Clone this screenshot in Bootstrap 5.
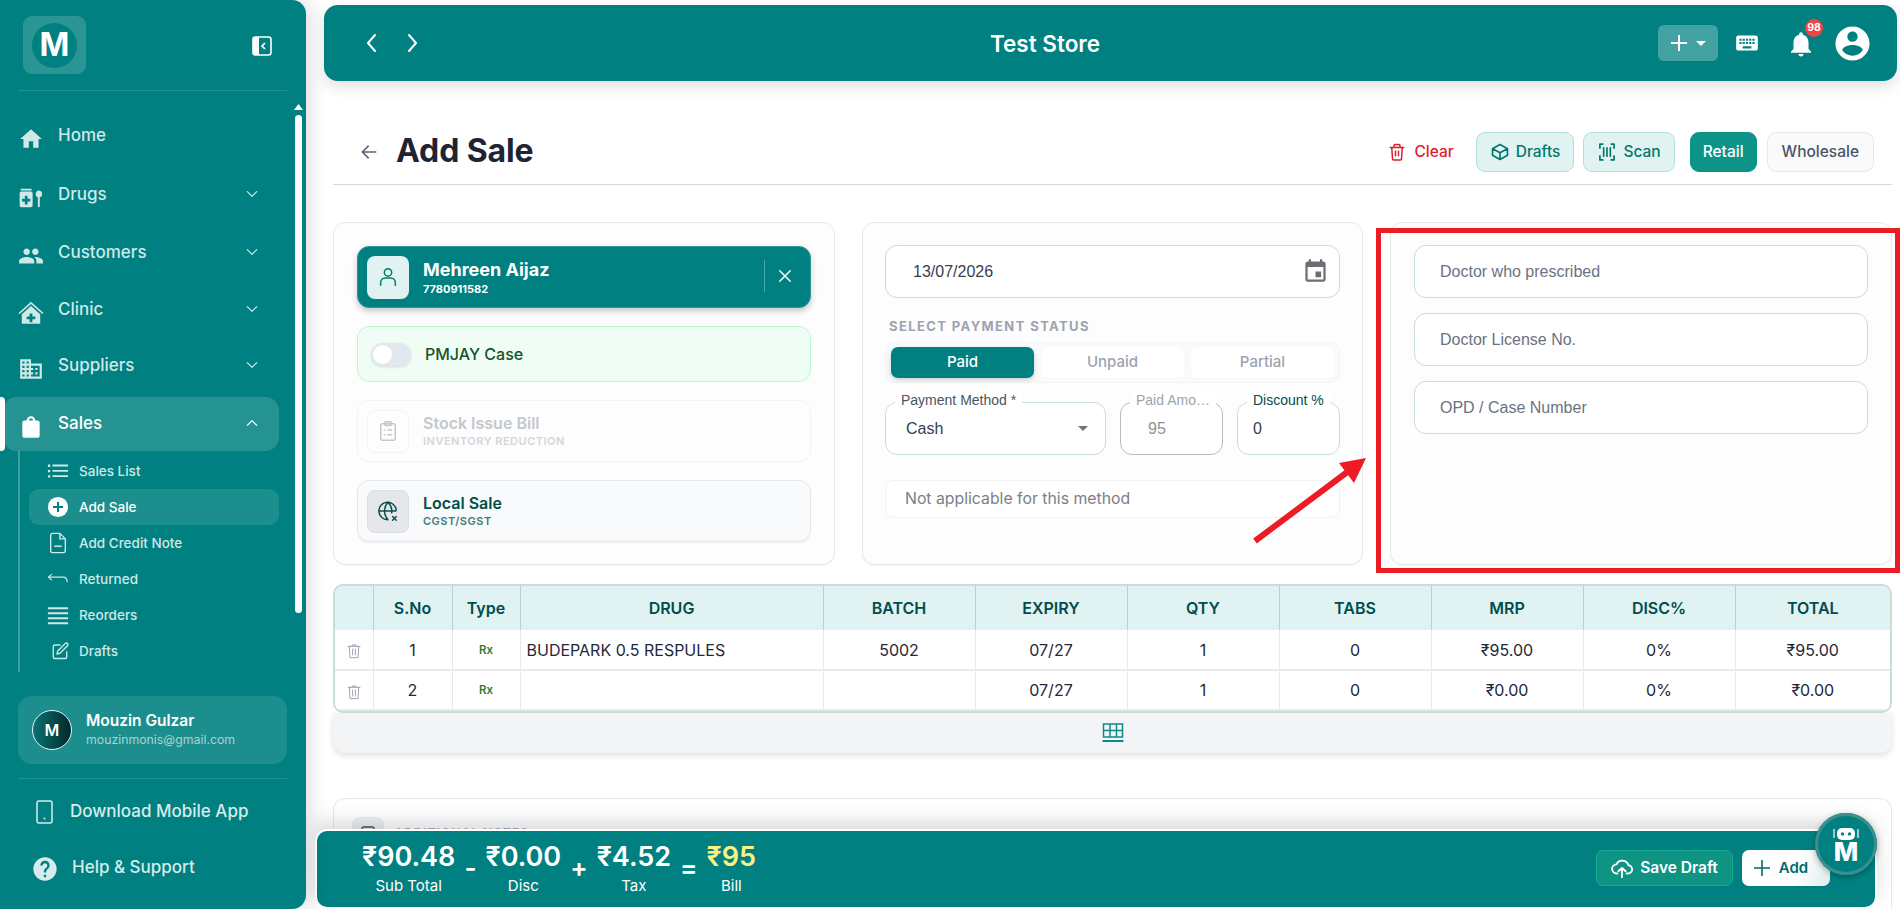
<!DOCTYPE html>
<html lang="en">
<head>
<meta charset="UTF-8">
<meta name="viewport" content="width=device-width, initial-scale=1">
<title>Add Sale - Test Store</title>
<link rel="stylesheet" href="https://cdn.jsdelivr.net/npm/bootstrap@5.3.0/dist/css/bootstrap.min.css">
<style>
html, body { height: 100%; overflow: hidden; }
body { font-family: Inter, "Liberation Sans", sans-serif; background: #fff; color: #1f2937; }
.app-shell { height: 909px; overflow: hidden; }
.ico-fill { fill: currentColor; stroke: none; }
.ico-line { fill: none; stroke: currentColor; stroke-width: 2; stroke-linecap: round; stroke-linejoin: round; }

/* sidebar */
.side { width: 306px; flex: 0 0 306px; background: #008080; border-radius: 0 14px 14px 0; box-shadow: 4px 0 18px rgba(30,40,60,.16); position: relative; z-index: 3; color: #cfe8e8; }
.side-head { height: 91px; margin: 0 19px 0 18px; padding: 16px 15px 0 5px; border-bottom: 1px solid rgba(255,255,255,.14); }
.logo-box { width: 63px; height: 58px; border-radius: 9px; background: rgba(255,255,255,.17); }
.logo-disc { width: 45px; height: 45px; border-radius: 50%; background: #008080; color: #fff; font-weight: 700; font-size: 32px; line-height: 1; }
.collapse-ico { width: 20px; height: 20px; color: #fff; margin-top: 20px; }
.main-nav { margin-top: 15px; }
.main-nav .nav-link { color: #cfe8e8; font-size: 17px; font-weight: 500; height: 58px; padding: 2px 47px 0 18px; gap: 14px; }
.main-nav .nav-link > .nav-ico { width: 26px; height: 26px; margin-top: 5px; flex: none; }
.main-nav .nav-link > .chev { width: 14px; height: 14px; margin-top: -2px; }
.main-nav > .nav-item:nth-child(2) { margin-top: 1px; }
.main-nav > .nav-item:nth-child(4) .nav-link, .main-nav > .nav-item:nth-child(5) .nav-link { height: 56px; }
.main-nav .nav-link.sales-open { height: 54px; margin: 4px 27px 0 3px; padding: 0 20px 0 15px; background: rgba(255,255,255,.15); border-radius: 14px; color: #fff; }
.active-tick { position: absolute; left: 0; top: 397px; width: 5px; height: 54px; background: #fff; border-radius: 0 4px 4px 0; }
.sub-nav { margin: 0 0 0 18px; padding: 2px 27px 3px 9px; border-left: 2px solid rgba(255,255,255,.25); }
.sub-nav .nav-link { height: 36px; padding: 0 0 0 18px; gap: 10px; color: #cfe8e8; font-size: 13.5px; font-weight: 500; border-radius: 10px; }
.sub-nav .nav-link svg { width: 22px; height: 22px; flex: none; }
.sub-nav .nav-link svg.ico-small { width: 18px; height: 18px; margin-left: 4px; }
.sub-nav .nav-link.on { background: rgba(255,255,255,.11); color: #fff; }
.side-user { margin: 24px 19px 0 18px; height: 68px; padding: 0 14px; gap: 14px; background: rgba(255,255,255,.11); border-radius: 14px; }
.side-avatar { width: 40px; height: 40px; border-radius: 50%; border: 1px solid #e6f2f2; background: linear-gradient(90deg, #0a7272, #02292b); color: #fff; font-weight: 600; font-size: 16px; }
.side-user-name { color: #fff; font-size: 15.5px; font-weight: 600; line-height: 20px; }
.side-user-mail { color: #a9d3d3; font-size: 12.3px; line-height: 18px; }
.side-sep { margin: 14px 19px 0 18px; border-top: 1px solid rgba(255,255,255,.14); }
.side-extra { font-size: 17px; font-weight: 500; color: #d6ecec; }
.side-extra svg { flex: none; }
.side-app { margin: 21px 0 0 36px; gap: 17px; height: 24px; }
.side-help { margin: 31px 0 0 31px; gap: 13px; }
.rail { position: absolute; left: 295px; top: 115px; width: 7px; height: 498px; background: #fff; border-radius: 4px; }
.rail-up { position: absolute; left: 294px; top: 104px; width: 9px; height: 6px; background: #fff; clip-path: polygon(50% 0, 100% 100%, 0 100%); }

/* main */
.main-col { padding: 5px 3px 0 18px; position: relative; min-width: 0; }
.top-strip { height: 76px; background: #008080; border-radius: 14px; box-shadow: 0 6px 14px rgba(40,50,60,.14); padding: 0 24px 0 41px; color: #fff; }
.top-strip h1 { font-size: 22.5px; font-weight: 600; margin: 0; }
.top-back { width: 67px; gap: 30px; }
.top-plus { width: 60px; height: 36px; background: rgba(255,255,255,.27); border: 0; border-radius: 6px; color: #fff; padding: 0; }
.caret-w { width: 0; height: 0; border-left: 5px solid transparent; border-right: 5px solid transparent; border-top: 5px solid #fff; }
.bell-wrap { position: relative; width: 28px; height: 28px; margin-left: 26px; }
.bell-count { position: absolute; top: -10px; left: 19px; width: 18px; height: 18px; border-radius: 50%; background: #ef4444; color: #fff; font-size: 10.5px; font-weight: 700; padding: 0; line-height: 18px; }
.user-ico { margin-left: 18px; }
.page-wrap { margin: 0 5px 0 9px; }
.page-top { margin-top: 41px; height: 63px; padding-bottom: 3px; border-bottom: 1px solid #d5d8dc; }
.back-ico { margin-left: 26px; color: #5b6270; }
.page-top h2 { font-size: 32px; font-weight: 700; color: #1e2433; margin: 0 0 0 17px; letter-spacing: -.1px; }
.btn-head { height: 40px; padding: 0 13px; font-size: 15.5px; font-weight: 500; border-radius: 9px; gap: 6px; }
.btn-clear { color: #e11d2a; background: transparent; border: 0; gap: 8px; }
.btn-soft { background: #e0f2f1; border: 1px solid #b2dfdb; color: #00796b; margin-left: 9px; }
.btn-retail { background: #0d9488; border: 1px solid #0d9488; color: #fff; padding: 0 12px; margin-left: 15px; }
.btn-whole { background: #f8fafc; border: 1px solid #e5e7eb; color: #4b5563; padding: 0 14px; margin: 0 18px 0 10px; }

.panels { margin-top: 37px; gap: 27px; }
.panel { height: 343px; min-width: 0; background: #fdfdfd; border: 1px solid #e6e8eb; border-radius: 12px; box-shadow: 0 1px 2px rgba(0,0,0,.04); padding: 22px 23px 0; }
.panel-cust { flex: 0 0 502px; padding-top: 23px; }
.panel-pay { flex: 0 0 501px; padding: 22px 22px 0; }
.panel-doc { flex: 0 0 502px; }
.tile { border-radius: 12px; padding: 0 9px; gap: 14px; }
.tile-box { width: 42px; height: 43px; border-radius: 8px; flex: none; }
.tile-title { font-size: 16px; font-weight: 600; line-height: 20px; }
.tile-sub { font-size: 11px; font-weight: 600; line-height: 16px; letter-spacing: .5px; }
.tile-cust { height: 62px; background: #008080; border: 1px solid #2e9a9a; color: #fff; box-shadow: 0 3px 6px rgba(0,0,0,.22); }
.tile-cust .tile-box { background: #e0f2f1; color: #00796b; }
.tile-cust .tile-title { font-size: 18px; font-weight: 700; line-height: 24px; }
.tile-cust .tile-sub { letter-spacing: 0; font-weight: 700; line-height: 14px; }
.tile-x { border: 0; border-left: 1px solid rgba(255,255,255,.3); height: 32px; padding: 0 0 0 11px; margin: 0 7px 2px 0; background: none; color: #fff; }
.tile-pm { margin-top: 18px; height: 56px; background: #f0fdf4; border: 1px solid #bbf7d0; padding: 0 13px; font-size: 16px; font-weight: 500; color: #14532d; }
.tile-pm .form-check { padding: 0; margin: 0; min-height: 0; }
.tile-pm .form-check-input { width: 40px; height: 23px; margin: 0; float: none; display: block; background-color: #e2e8f0; border: 0; box-shadow: 0 1px 3px rgba(0,0,0,.12); background-image: url("data:image/svg+xml,%3csvg xmlns='http://www.w3.org/2000/svg' viewBox='-4 -4 8 8'%3e%3ccircle r='3.3' fill='%23fff'/%3e%3c/svg%3e"); }
.tile-stock { margin-top: 18px; height: 62px; border: 1px solid #f3f4f6; color: #c4c7cc; }
.tile-stock .tile-box { border: 1px solid #f3f4f6; color: #c4c7cc; }
.tile-stock .tile-sub { color: #d4d6da; }
.tile-local { margin-top: 18px; height: 62px; background: #f8fafc; border: 1px solid #e5e7eb; color: #004d4d; box-shadow: 0 1px 2px rgba(0,0,0,.05); }
.tile-local .tile-box { background: #e5e7eb; border: 1px solid #dcdfe3; color: #0b5050; }
.tile-local .tile-sub { color: #3f7a7a; }

.field { height: 53px; background: #fff; border: 1px solid #c9dbdb; border-radius: 12px; font-family: "Liberation Sans", Arial, sans-serif; font-size: 16px; padding: 0 25px; color: #374151; box-shadow: none; }
.field::placeholder { color: #6b7280; opacity: 1; }
.field-date { padding: 0 10px 0 27px; }
.pay-label { margin: 18px 0 0 4px; font-size: 13px; font-weight: 700; letter-spacing: 1.4px; color: #9ca3af; line-height: 20px; white-space: nowrap; }
.pay-tabs { margin-top: 6px; height: 41px; background: #f9fafb; border: 1px solid #f3f4f6; border-radius: 9px; padding: 4px 5px; gap: 7px; }
.pay-tabs .btn { flex: 1 1 0; padding: 0; border: 0; border-radius: 7px; font-size: 15px; font-weight: 500; background: #fff; color: #9ca3af; }
.pay-tabs .btn.on { background: #008080; color: #fff; box-shadow: 0 2px 5px rgba(0,0,0,.18); }
.pay-fields { margin-top: 19px; gap: 14px; }
.out-box { position: relative; height: 53px; border: 1px solid #c9dbdb; border-radius: 12px; background: #fff; font-family: "Liberation Sans", Arial, sans-serif; font-size: 16px; color: #374151; padding: 0 15px; }
.out-method { flex: 0 0 221px; padding-left: 20px; }
.out-paid { flex: 0 0 103px; }
.out-disc { flex: 0 0 103px; }
.out-box.off { border-color: #b6bcbf; color: #8d9297; padding-left: 27px; }
.out-label { position: absolute; top: -12px; left: 9px; font-size: 14px; line-height: 18px; color: #4b5563; background: #fff; padding: 0 6px; white-space: nowrap; }
.out-box.off .out-label { color: #9ca3af; }
.out-disc .out-label { color: #004d4d; }
.sel-caret { width: 0; height: 0; border-left: 5px solid transparent; border-right: 5px solid transparent; border-top: 5px solid #6b7280; margin-right: 2px; }
.na-box { margin-top: 25px; height: 38px; background: #fff; border: 1px solid #f0f1f3; border-radius: 8px; padding: 0 19px; font-size: 15.8px; color: #7a8088; }
.doc-field + .doc-field { margin-top: 15px; }

.tbl-wrap { margin-top: 19px; border: 2px solid #cbdcdc; border-radius: 10px; overflow: hidden; background: #fff; }
.tbl-wrap .table { table-layout: fixed; margin: 0; font-size: 16px; color: #1f2937; }
.tbl-wrap th { height: 44px; background: #e0f2f1; color: #004d4d; font-size: 16px; font-weight: 600; text-align: center; vertical-align: middle; padding: 0; border-color: #b4d4d1; border-width: 0 1px 0 0; }
.tbl-wrap td { height: 40px; text-align: center; vertical-align: middle; padding: 0 6px; border-color: #e4eceb; border-width: 0 1px 2px 0; background: #fff; }
.tbl-wrap tr th:last-child, .tbl-wrap tr td:last-child { border-right: 0; }
.tbl-wrap td.drug-cell { text-align: left; white-space: nowrap; }
.rx-tag { font-size: 11.5px; font-weight: 600; color: #2e7d32; position: relative; top: -2px; }
.del-ico { width: 16px; height: 16px; color: #9ca3af; }
.tbl-foot { height: 40px; background: #f2f4f5; border-radius: 0 0 12px 12px; box-shadow: 0 3px 6px rgba(0,0,0,.12); color: #0d8a8a; }
.notes-card { margin-top: 45px; height: 111px; background: #fff; border: 1px solid #e5e7eb; border-bottom: 0; border-radius: 12px 12px 0 0; padding: 18px; gap: 10px; color: #a6adbb; font-size: 12px; font-weight: 700; letter-spacing: 1px; align-items: flex-start; }
.notes-ico { width: 32px; height: 32px; border-radius: 8px; background: #eef0f2; padding-top: 9px; }
.notes-ico i { display: block; width: 14px; height: 16px; margin: 0 auto; border: 2px solid #6b7280; border-radius: 3px; }
.notes-text { margin-top: 7px; }

.sum-bar { position: absolute; left: 9px; top: 829px; width: 1562px; height: 80px; background: #008080; border: 2px solid #fff; border-radius: 12px; box-shadow: 0 -8px 18px rgba(40,50,60,.17); padding: 0 45px 2px 45px; color: #fff; gap: 9px; }
.sum-val { font-size: 27px; font-weight: 600; line-height: 33px; white-space: nowrap; }
.sum-lab { font-size: 15px; line-height: 20px; margin-top: 3px; }
.sum-op { font-size: 26px; font-weight: 600; line-height: 1; }
.sum-bill { color: #fdf082; }
.btn-draft { height: 36px; width: 137px; background: #0f9484; border: 1px solid #14ab97; border-radius: 7px; color: #fff; font-size: 15.5px; font-weight: 600; padding: 0; gap: 7px; }
.btn-draft:hover { background: #0f9484; color: #fff; }
.btn-add { height: 36px; width: 88px; background: linear-gradient(100deg, #fff 60%, #dfeeee); border: 0; border-radius: 7px; color: #00696b; font-size: 15px; font-weight: 600; padding: 0 10px 0 0; gap: 9px; }
.bot-disc { position: absolute; left: 1509px; top: 813px; width: 62px; height: 62px; border-radius: 50%; background: #008080; box-shadow: inset 0 0 0 3px #3c8f8f, 0 2px 6px rgba(0,0,0,.3); color: #fff; z-index: 2; }
.bot-m { font-size: 26px; font-weight: 800; line-height: 22px; }

/* annotation laid over the screenshot */
.mark-box { position: absolute; left: 1070px; top: 228px; width: 524px; height: 345px; border: 5px solid #ed1c24; z-index: 4; }
.mark-arrow { position: absolute; left: 0; top: 0; width: 1594px; height: 600px; z-index: 4; pointer-events: none; }
</style>
</head>
<body>
<div class="app-shell d-flex">
    <aside class="side d-flex flex-column">
        <div class="side-head d-flex justify-content-between align-items-start">
            <div class="logo-box d-flex align-items-center justify-content-center">
                <div class="logo-disc d-flex align-items-center justify-content-center">M</div>
            </div>
            <svg class="collapse-ico" viewBox="0 0 20 20"><rect x="1" y="1" width="18" height="18" rx="2.5" fill="none" stroke="currentColor" stroke-width="1.6"/><path class="ico-fill" d="M1 3.5A2.5 2.5 0 0 1 3.500 1H7v18H3.500A2.500 2.500 0 0 1 1 16.500z"/><path d="M13 7l-3 3 3 3" fill="none" stroke="currentColor" stroke-width="1.700"/></svg>
        </div>
        <div class="rail-up"></div>
        <div class="rail"></div>
        <div class="active-tick"></div>

        <ul class="nav flex-column main-nav">
            <li class="nav-item"><a class="nav-link d-flex align-items-center" href="#">
                <svg class="nav-ico" viewBox="0 0 24 24"><path class="ico-fill" d="M10 20v-6h4v6h5v-8h3L12 3 2 12h3v8z"/></svg>Home</a></li>
            <li class="nav-item"><a class="nav-link d-flex align-items-center" href="#">
                <svg class="nav-ico" viewBox="0 0 24 24"><path class="ico-fill" fill-rule="evenodd" d="M2.500 3.500h10v1.500h-10zM3 6h9a1.500 1.500 0 0 1 1.500 1.500V19A1.500 1.500 0 0 1 12 20.500H3A1.500 1.500 0 0 1 1.500 19V7.500A1.500 1.500 0 0 1 3 6zM6.300 10v2.700H3.700v2.600h2.600V18h2.500v-2.700h2.600v-2.600H8.800V10z"/><path class="ico-fill" d="M19.300 5c1.700 0 3 1.500 3 3.300 0 1.500-.9 2.800-2.200 3.100v8.300a.9.900 0 0 1-1.800 0v-8.300c-1.200-.3-2-1.600-2-3.100C16.300 6.500 17.600 5 19.300 5z"/></svg>Drugs
                <svg class="chev ico-line ms-auto" viewBox="0 0 24 24"><path d="M4 8l8 8 8-8"/></svg></a></li>
            <li class="nav-item"><a class="nav-link d-flex align-items-center" href="#">
                <svg class="nav-ico" viewBox="0 0 24 24"><path class="ico-fill" d="M16 11c1.660 0 2.990-1.340 2.990-3S17.660 5 16 5c-1.660 0-3 1.340-3 3s1.340 3 3 3zm-8 0c1.660 0 2.990-1.340 2.990-3S9.660 5 8 5C6.340 5 5 6.340 5 8s1.340 3 3 3zm0 2c-2.330 0-7 1.170-7 3.500V19h14v-2.500c0-2.330-4.670-3.500-7-3.500zm8 0c-.290 0-.620.020-.970.050 1.160.840 1.970 1.970 1.970 3.450V19h6v-2.500c0-2.330-4.670-3.500-7-3.500z"/></svg>Customers
                <svg class="chev ico-line ms-auto" viewBox="0 0 24 24"><path d="M4 8l8 8 8-8"/></svg></a></li>
            <li class="nav-item"><a class="nav-link d-flex align-items-center" href="#">
                <svg class="nav-ico" viewBox="0 0 24 24"><path class="ico-fill" fill-rule="evenodd" d="M12 1.500L.5 12l1 1L12 3.600 22.500 13l1-1zM12 5.500l-8.500 7.700V22h17v-8.800zM10.700 12.500h2.600v2.700H16v2.600h-2.700v2.700h-2.600v-2.700H8v-2.600h2.700z"/></svg>Clinic
                <svg class="chev ico-line ms-auto" viewBox="0 0 24 24"><path d="M4 8l8 8 8-8"/></svg></a></li>
            <li class="nav-item"><a class="nav-link d-flex align-items-center" href="#">
                <svg class="nav-ico" viewBox="0 0 24 24"><path class="ico-fill" d="M12 7V3H2v18h20V7H12zM6 19H4v-2h2v2zm0-4H4v-2h2v2zm0-4H4V9h2v2zm0-4H4V5h2v2zm4 12H8v-2h2v2zm0-4H8v-2h2v2zm0-4H8V9h2v2zm0-4H8V5h2v2zm10 12h-8v-2h2v-2h-2v-2h2v-2h-2V9h8v10zm-2-8h-2v2h2v-2zm0 4h-2v2h2v-2z"/></svg>Suppliers
                <svg class="chev ico-line ms-auto" viewBox="0 0 24 24"><path d="M4 8l8 8 8-8"/></svg></a></li>
            <li class="nav-item"><a class="nav-link sales-open d-flex align-items-center" href="#">
                <svg class="nav-ico" viewBox="0 0 24 24"><path class="ico-fill" d="M18 6h-2c0-2.210-1.790-4-4-4S8 3.790 8 6H6c-1.100 0-2 .9-2 2v12c0 1.100.9 2 2 2h12c1.100 0 2-.9 2-2V8c0-1.100-.9-2-2-2zm-6-2c1.100 0 2 .9 2 2h-4c0-1.100.9-2 2-2z"/></svg>Sales
                <svg class="chev ico-line ms-auto" viewBox="0 0 24 24"><path d="M4 16l8-8 8 8"/></svg></a>
                <ul class="nav flex-column sub-nav">
                    <li class="nav-item"><a class="nav-link d-flex align-items-center" href="#"><svg viewBox="0 0 24 24"><path class="ico-fill" d="M1 5h2.500v2.500H1zM1 10.800h2.500v2.500H1zM1 16.500h2.500V19H1zM6 5h17v2H6zM6 10.800h17v2H6zM6 16.500h17v2H6z"/></svg>Sales List</a></li>
                    <li class="nav-item"><a class="nav-link on d-flex align-items-center" href="#"><svg viewBox="0 0 24 24"><path fill="#fff" d="M12 1a11 11 0 1 0 0 22 11 11 0 0 0 0-22z"/><path d="M12 6.500v11M6.500 12h11" stroke="#008080" stroke-width="2.200" fill="none"/></svg>Add Sale</a></li>
                    <li class="nav-item"><a class="nav-link d-flex align-items-center" href="#"><svg class="ico-line" viewBox="0 0 24 24"><path stroke-width="1.500" d="M14 1.500H6A2 2 0 0 0 4 3.500v17a2 2 0 0 0 2 2h12a2 2 0 0 0 2-2V7.500zM14 1.500v6h6M8.500 15.500h7"/></svg>Add Credit Note</a></li>
                    <li class="nav-item"><a class="nav-link d-flex align-items-center" href="#"><svg class="ico-line" viewBox="0 0 24 24"><path stroke-width="1.300" d="M5 7L1.500 10 5 13M2 10h15c3 0 5 2 5 5"/></svg>Returned</a></li>
                    <li class="nav-item"><a class="nav-link d-flex align-items-center" href="#"><svg viewBox="0 0 24 24"><path class="ico-fill" d="M1 3.500h22v2.200H1zM1 9h22v2.200H1zM1 14.500h22v2.200H1zM1 20h22v2.200H1z"/></svg>Reorders</a></li>
                    <li class="nav-item"><a class="nav-link d-flex align-items-center" href="#"><svg class="ico-line ico-small" viewBox="0 0 24 24"><path stroke-width="1.800" d="M12 4H5a2 2 0 0 0-2 2v14a2 2 0 0 0 2 2h14a2 2 0 0 0 2-2v-7M19 2a2.100 2.100 0 0 1 3 3L12 15l-4 1 1-4z"/></svg>Drafts</a></li>
                </ul>
            </li>
        </ul>

        <div class="side-user d-flex align-items-center">
            <div class="side-avatar d-flex align-items-center justify-content-center flex-shrink-0">M</div>
            <div>
                <div class="side-user-name">Mouzin Gulzar</div>
                <div class="side-user-mail">mouzinmonis@gmail.com</div>
            </div>
        </div>
        <div class="side-sep"></div>
        <div class="side-extra side-app d-flex align-items-center">
            <svg width="17" height="24" viewBox="0 0 17 24"><rect x="1" y="1" width="15" height="22" rx="2" fill="none" stroke="currentColor" stroke-width="1.500"/><circle cx="8.500" cy="18.500" r="1" fill="currentColor"/></svg>
            Download Mobile App
        </div>
        <div class="side-extra side-help d-flex align-items-start">
            <svg width="28" height="28" viewBox="0 0 24 24"><path class="ico-fill" d="M12 2C6.480 2 2 6.480 2 12s4.480 10 10 10 10-4.480 10-10S17.520 2 12 2zm1 17h-2v-2h2v2zm2.070-7.750l-.9.920C13.450 12.900 13 13.500 13 15h-2v-.5c0-1.100.450-2.100 1.170-2.830l1.240-1.260c.370-.360.590-.860.590-1.410 0-1.100-.9-2-2-2s-2 .9-2 2H8c0-2.210 1.790-4 4-4s4 1.790 4 4c0 .880-.360 1.680-.930 2.250z"/></svg>
            <span>Help &amp; Support</span>
        </div>
    </aside>

    <main class="main-col flex-grow-1">
        <header class="top-strip d-flex align-items-center justify-content-between">
            <div class="top-back d-flex align-items-center">
                <svg width="12" height="20" viewBox="0 0 12 20" class="ico-line flex-shrink-0"><path d="M10 2L3 10l7 8"/></svg>
                <svg width="12" height="20" viewBox="0 0 12 20" class="ico-line flex-shrink-0"><path d="M2 2l7 8-7 8"/></svg>
            </div>
            <h1>Test Store</h1>
            <div class="d-flex align-items-center">
                <button class="btn top-plus d-flex align-items-center justify-content-center gap-2" type="button">
                    <svg width="18" height="18" viewBox="0 0 18 18"><path d="M9 1v16M1 9h16" stroke="#fff" stroke-width="2"/></svg>
                    <span class="caret-w"></span>
                </button>
                <svg class="ms-3" width="26" height="26" viewBox="0 0 24 24"><path class="ico-fill" d="M20 5H4c-1.100 0-1.990.9-1.990 2L2 17c0 1.100.9 2 2 2h16c1.100 0 2-.9 2-2V7c0-1.100-.9-2-2-2zm-9 3h2v2h-2V8zm0 3h2v2h-2v-2zM8 8h2v2H8V8zm0 3h2v2H8v-2zm-1 2H5v-2h2v2zm0-3H5V8h2v2zm9 7H8v-2h8v2zm0-4h-2v-2h2v2zm0-3h-2V8h2v2zm3 3h-2v-2h2v2zm0-3h-2V8h2v2z"/></svg>
                <div class="bell-wrap">
                    <svg width="30" height="30" viewBox="0 0 24 24"><path class="ico-fill" d="M12 22c1.100 0 2-.9 2-2h-4c0 1.100.890 2 2 2zm6-6v-5c0-3.070-1.640-5.640-4.500-6.320V4c0-.830-.670-1.500-1.500-1.500s-1.500.670-1.500 1.500v.680C7.630 5.360 6 7.920 6 11v5l-2 2v1h16v-1l-2-2z"/></svg>
                    <span class="badge bell-count">98</span>
                </div>
                <svg class="user-ico" width="41" height="41" viewBox="0 0 24 24"><path class="ico-fill" d="M12 2C6.480 2 2 6.480 2 12s4.480 10 10 10 10-4.480 10-10S17.520 2 12 2zm0 3c1.660 0 3 1.340 3 3s-1.340 3-3 3-3-1.340-3-3 1.340-3 3-3zm0 14.200c-2.500 0-4.710-1.280-6-3.220.030-1.990 4-3.080 6-3.080 1.990 0 5.970 1.090 6 3.080-1.290 1.940-3.500 3.220-6 3.220z"/></svg>
            </div>
        </header>

        <div class="page-wrap">
            <div class="page-top d-flex align-items-center">
                <svg class="back-ico" width="20" height="20" viewBox="0 0 24 24"><path class="ico-line" d="M20 12H4M11 5l-7 7 7 7"/></svg>
                <h2>Add Sale</h2>
                <div class="ms-auto d-flex align-items-center">
                    <button class="btn btn-head btn-clear d-flex align-items-center" type="button">
                        <svg class="ico-line" width="18" height="18" viewBox="0 0 24 24"><path d="M3 6h18M8 6V3.500A1.500 1.500 0 0 1 9.500 2h5A1.500 1.500 0 0 1 16 3.500V6M5 6l1 15a1.500 1.500 0 0 0 1.500 1.500h9A1.500 1.500 0 0 0 18 21l1-15M10 11v6M14 11v6"/></svg>Clear
                    </button>
                    <button class="btn btn-head btn-soft d-flex align-items-center" type="button">
                        <svg class="ico-line" width="20" height="20" viewBox="0 0 24 24"><path d="M21 8L12 3 3 8v8l9 5 9-5zM3 8l9 5 9-5M12 13v8"/></svg>Drafts
                    </button>
                    <button class="btn btn-head btn-soft d-flex align-items-center" type="button">
                        <svg class="ico-line" width="20" height="20" viewBox="0 0 24 24"><path d="M7 2.500H3.500v5M17 2.500h3.500v5M7 21.500H3.500v-5M17 21.500h3.500v-5M8 7v10M12 7v10M16 7v10"/></svg>Scan
                    </button>
                    <button class="btn btn-head btn-retail" type="button">Retail</button>
                    <button class="btn btn-head btn-whole" type="button">Wholesale</button>
                </div>
            </div>

            <div class="panels d-flex">
                <section class="panel panel-cust">
                    <div class="tile tile-cust d-flex align-items-center">
                        <div class="tile-box d-flex align-items-center justify-content-center">
                            <svg class="ico-line" width="22" height="22" viewBox="0 0 24 24"><circle cx="12" cy="7" r="4" stroke-width="1.600"/><path stroke-width="1.600" d="M4 21v-3a5 5 0 0 1 5-5h6a5 5 0 0 1 5 5v3"/></svg>
                        </div>
                        <div class="flex-grow-1">
                            <div class="tile-title">Mehreen Aijaz</div>
                            <div class="tile-sub">7780911582</div>
                        </div>
                        <button class="tile-x d-flex align-items-center" type="button" aria-label="Remove">
                            <svg class="ico-line" width="18" height="18" viewBox="0 0 24 24"><path d="M5 5l14 14M19 5L5 19"/></svg>
                        </button>
                    </div>
                    <div class="tile tile-pm d-flex align-items-center">
                        <div class="form-check form-switch"><input class="form-check-input" type="checkbox" role="switch" aria-label="PMJAY Case"></div>
                        <span>PMJAY Case</span>
                    </div>
                    <div class="tile tile-stock d-flex align-items-center">
                        <div class="tile-box d-flex align-items-center justify-content-center">
                            <svg class="ico-line" width="22" height="22" viewBox="0 0 24 24"><g stroke-width="1.600"><rect x="4" y="4" width="16" height="18" rx="2"/><rect x="8.500" y="2" width="7" height="4" rx="1"/><path d="M8 11h.5M12 11h4M8 16h.5M12 16h4"/></g></svg>
                        </div>
                        <div>
                            <div class="tile-title">Stock Issue Bill</div>
                            <div class="tile-sub">INVENTORY REDUCTION</div>
                        </div>
                    </div>
                    <div class="tile tile-local d-flex align-items-center">
                        <div class="tile-box d-flex align-items-center justify-content-center">
                            <svg class="ico-line" width="22" height="22" viewBox="0 0 24 24"><path stroke-width="1.600" d="M21 11A9.500 9.500 0 1 0 12 21.500M2.500 12h18M12 2.500c-5 5.500-5 13.500 0 19M12 2.500c3.500 3.500 4.500 8 4 11.500M17 18l4 4M21 18l-4 4"/></svg>
                        </div>
                        <div>
                            <div class="tile-title">Local Sale</div>
                            <div class="tile-sub">CGST/SGST</div>
                        </div>
                    </div>
                </section>

                <section class="panel panel-pay">
                    <div class="form-control field field-date d-flex align-items-center justify-content-between">
                        <span>13/07/2026</span>
                        <svg style="color:#6b6f73" width="27" height="27" viewBox="0 0 24 24"><path class="ico-fill" d="M17 12h-5v5h5v-5zM16 1v2H8V1H6v2H5c-1.110 0-1.990.9-1.990 2L3 19c0 1.100.890 2 2 2h14c1.100 0 2-.9 2-2V5c0-1.100-.9-2-2-2h-1V1h-2zm3 18H5V8h14v11z"/></svg>
                    </div>
                    <div class="pay-label">SELECT PAYMENT STATUS</div>
                    <div class="pay-tabs d-flex">
                        <button class="btn on" type="button">Paid</button>
                        <button class="btn" type="button">Unpaid</button>
                        <button class="btn" type="button">Partial</button>
                    </div>
                    <div class="pay-fields d-flex">
                        <div class="out-box out-method d-flex align-items-center justify-content-between">
                            <span class="out-label">Payment Method *</span><span>Cash</span><span class="sel-caret"></span>
                        </div>
                        <div class="out-box out-paid off d-flex align-items-center">
                            <span class="out-label">Paid Amo…</span><span>95</span>
                        </div>
                        <div class="out-box out-disc d-flex align-items-center">
                            <span class="out-label">Discount %</span><span>0</span>
                        </div>
                    </div>
                    <div class="na-box d-flex align-items-center justify-content-between">
                        <span>Not applicable for this method</span>
                        <svg class="ico-line" style="color:#c8cbce;margin-right:4px" width="12" height="12" viewBox="0 0 24 24"><path d="M4 20L18 4l3 3L7 21z"/></svg>
                    </div>
                </section>

                <section class="panel panel-doc">
                    <input class="form-control field doc-field" type="text" placeholder="Doctor who prescribed">
                    <input class="form-control field doc-field" type="text" placeholder="Doctor License No.">
                    <input class="form-control field doc-field" type="text" placeholder="OPD / Case Number">
                </section>
            </div>

            <div class="tbl-wrap">
                <table class="table">
                    <colgroup><col style="width:38px"><col style="width:79px"><col style="width:68px"><col style="width:303px"><col style="width:152px"><col style="width:152px"><col style="width:152px"><col style="width:152px"><col style="width:152px"><col style="width:152px"><col></colgroup>
                    <thead>
                        <tr><th></th><th>S.No</th><th>Type</th><th>DRUG</th><th>BATCH</th><th>EXPIRY</th><th>QTY</th><th>TABS</th><th>MRP</th><th>DISC%</th><th>TOTAL</th></tr>
                    </thead>
                    <tbody>
                        <tr>
                            <td class="p-0"><svg class="del-ico ico-line" viewBox="0 0 24 24"><path stroke-width="1.500" d="M3 5h18M9 5V3h6v2M5 5l1 17h12l1-17M10 9v9M14 9v9"/></svg></td>
                            <td>1</td><td><span class="rx-tag">Rx</span></td><td class="drug-cell">BUDEPARK 0.5 RESPULES</td><td>5002</td><td>07/27</td><td>1</td><td>0</td><td>₹95.00</td><td>0%</td><td>₹95.00</td>
                        </tr>
                        <tr>
                            <td class="p-0"><svg class="del-ico ico-line" viewBox="0 0 24 24"><path stroke-width="1.500" d="M3 5h18M9 5V3h6v2M5 5l1 17h12l1-17M10 9v9M14 9v9"/></svg></td>
                            <td>2</td><td><span class="rx-tag">Rx</span></td><td class="drug-cell"></td><td></td><td>07/27</td><td>1</td><td>0</td><td>₹0.00</td><td>0%</td><td>₹0.00</td>
                        </tr>
                    </tbody>
                </table>
            </div>
            <div class="tbl-foot d-flex align-items-center justify-content-center">
                <svg width="22" height="20" viewBox="0 0 22 20"><path fill="none" stroke="currentColor" stroke-width="1.500" d="M1.500 1h19v13h-19zM1.500 7.500h19M8 1v13M14.500 1v13"/><path fill="currentColor" d="M.5 17h21v2H.5z"/></svg>
            </div>
            <div class="notes-card d-flex">
                <div class="notes-ico"><i></i></div>
                <span class="notes-text">ADDITIONAL NOTES</span>
            </div>
        </div>

        <div class="sum-bar d-flex align-items-center">
            <div class="text-center"><div class="sum-val">₹90.48</div><div class="sum-lab">Sub Total</div></div>
            <div class="sum-op">-</div>
            <div class="text-center"><div class="sum-val">₹0.00</div><div class="sum-lab">Disc</div></div>
            <div class="sum-op">+</div>
            <div class="text-center"><div class="sum-val">₹4.52</div><div class="sum-lab">Tax</div></div>
            <div class="sum-op">=</div>
            <div class="text-center"><div class="sum-val sum-bill">₹95</div><div class="sum-lab">Bill</div></div>
            <button class="btn btn-draft d-flex align-items-center justify-content-center ms-auto" type="button">
                <svg class="ico-line" width="22" height="22" viewBox="0 0 24 24"><path d="M12 22V12M8 15.500l4-3.500 4 3.500M7 18H6.500A5 5 0 0 1 6 8a7 7 0 0 1 13 1 4.500 4.500 0 0 1-1 9h-1"/></svg>Save Draft
            </button>
            <button class="btn btn-add d-flex align-items-center justify-content-center" type="button">
                <svg width="16" height="16" viewBox="0 0 16 16"><path d="M8 0v16M0 8h16" stroke="currentColor" stroke-width="1.600"/></svg>Add
            </button>
        </div>
        <div class="bot-disc d-flex flex-column align-items-center justify-content-center">
            <svg width="28" height="15" viewBox="0 0 28 15"><rect x="5" y="2" width="18" height="12" rx="5" fill="#fff"/><circle cx="10.500" cy="8" r="1.700" fill="#008080"/><circle cx="17.500" cy="8" r="1.700" fill="#008080"/><path d="M2 3v9M26 3v9" stroke="#fff" stroke-width="1.200"/></svg>
            <div class="bot-m">M</div>
        </div>

        <div class="mark-box"></div>
        <svg class="mark-arrow" viewBox="0 0 1594 600"><path d="M949 541L1044 470" stroke="#ed1c24" stroke-width="6" fill="none"/><path d="M1060 458L1033 463 1048 483z" fill="#ed1c24"/></svg>
    </main>
</div>
<script src="https://cdn.jsdelivr.net/npm/bootstrap@5.3.0/dist/js/bootstrap.bundle.min.js"></script>
</body>
</html>
